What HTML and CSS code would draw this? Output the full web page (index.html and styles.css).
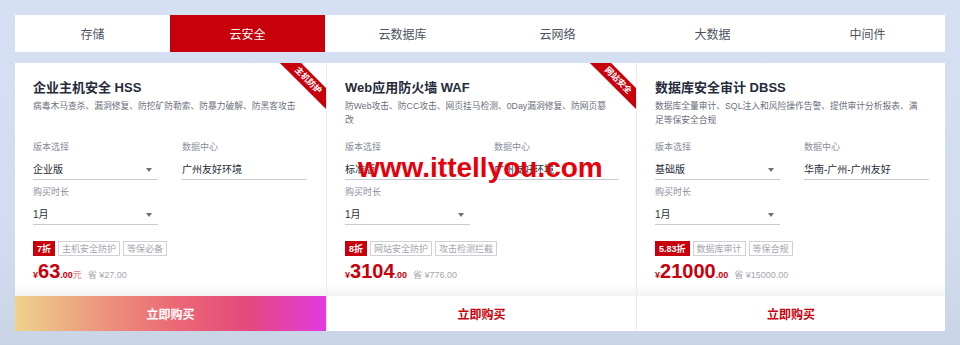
FILE: index.html
```html
<!DOCTYPE html>
<html lang="zh-CN">
<head>
<meta charset="utf-8">
<title>云安全</title>
<link rel="stylesheet" href="styles.css">
</head>
<body>
<div class="page">
  <nav class="tabs">
    <div class="tab">存储</div>
    <div class="tab active">云安全</div>
    <div class="tab">云数据库</div>
    <div class="tab">云网络</div>
    <div class="tab">大数据</div>
    <div class="tab">中间件</div>
  </nav>
  <div class="cards">
    <div class="card">
      <div class="ribbon">主机防护</div>
      <div class="card-body">
        <h3 class="title">企业主机安全 HSS</h3>
        <p class="desc">病毒木马查杀、漏洞修复、防挖矿防勒索、防暴力破解、防黑客攻击</p>
        <div class="form">
          <div class="field"><div class="label">版本选择</div><div class="select arrow">企业版</div></div>
          <div class="field"><div class="label">数据中心</div><div class="select">广州友好环境</div></div>
          <div class="field"><div class="label">购买时长</div><div class="select arrow">1月</div></div>
        </div>
        <div class="tags"><span class="tag hot">7折</span><span class="tag">主机安全防护</span><span class="tag">等保必备</span></div>
        <div class="price"><span class="yen">¥</span><span class="num">63</span><span class="dec">.00</span><span class="unit">元</span><span class="save">省 ¥27.00</span></div>
      </div>
      <div class="fade"></div>
      <div class="buy buy-grad">立即购买</div>
    </div>
    <div class="card">
      <div class="ribbon">网站安全</div>
      <div class="card-body">
        <h3 class="title">Web应用防火墙 WAF</h3>
        <p class="desc">防Web攻击、防CC攻击、网页挂马检测、0Day漏洞修复、防网页篡改</p>
        <div class="form">
          <div class="field"><div class="label">版本选择</div><div class="select arrow">标准版</div></div>
          <div class="field"><div class="label">数据中心</div><div class="select">广州友好环境</div></div>
          <div class="field"><div class="label">购买时长</div><div class="select arrow">1月</div></div>
        </div>
        <div class="tags"><span class="tag hot">8折</span><span class="tag">网站安全防护</span><span class="tag">攻击检测拦截</span></div>
        <div class="price"><span class="yen">¥</span><span class="num">3104</span><span class="dec">.00</span><span class="save">省 ¥776.00</span></div>
      </div>
      <div class="fade"></div>
      <div class="buy">立即购买</div>
    </div>
    <div class="card">
      <div class="card-body">
        <h3 class="title">数据库安全审计 DBSS</h3>
        <p class="desc">数据库全量审计、SQL注入和风险操作告警、提供审计分析报表、满足等保安全合规</p>
        <div class="form">
          <div class="field"><div class="label">版本选择</div><div class="select arrow">基础版</div></div>
          <div class="field"><div class="label">数据中心</div><div class="select">华南-广州-广州友好</div></div>
          <div class="field"><div class="label">购买时长</div><div class="select arrow">1月</div></div>
        </div>
        <div class="tags"><span class="tag hot">5.83折</span><span class="tag">数据库审计</span><span class="tag">等保合规</span></div>
        <div class="price"><span class="yen">¥</span><span class="num">21000</span><span class="dec">.00</span><span class="save">省 ¥15000.00</span></div>
      </div>
      <div class="fade"></div>
      <div class="buy">立即购买</div>
    </div>
  </div>
  <div class="watermark">www.ittellyou.com</div>
</div>
</body>
</html>
```
FILE: styles.css
```css
* { box-sizing: border-box; }
html, body { margin: 0; padding: 0; }
body {
  width: 960px;
  height: 345px;
  overflow: hidden;
  background: linear-gradient(180deg, #d5e1f2 0%, #d1ddef 70%, #c9d4e7 100%);
  font-family: "Liberation Sans", "Noto Sans CJK SC", sans-serif;
  color: #252b3a;
}
.page {
  position: relative;
  padding: 15px 15px 0 15px;
}
.tabs {
  display: grid;
  grid-template-columns: repeat(6, 1fr);
  height: 37px;
  background: #fff;
}
.tab {
  display: flex;
  align-items: center;
  justify-content: center;
  font-size: 12px;
  color: #4e5362;
}
.tab.active {
  background: #c7000b;
  color: #fff;
}
.cards {
  margin-top: 11px;
  display: grid;
  grid-template-columns: 311px 310px 309px;
  background: #fff;
}
.card {
  position: relative;
  overflow: hidden;
  display: flex;
  flex-direction: column;
  background: #fff;
}
.card + .card { border-left: 1px solid #ececec; }
.ribbon {
  position: absolute;
  top: 10px;
  right: -22px;
  width: 80px;
  height: 15px;
  background: #c7000b;
  color: #fff;
  font-size: 8.5px;
  font-weight: bold;
  line-height: 15px;
  text-align: center;
  transform: rotate(45deg);
}
.card-body {
  padding: 16px 18px 0 18px;
  height: 220px;
}
.title {
  margin: 0;
  font-size: 13px;
  line-height: 18px;
  font-weight: bold;
  color: #252b3a;
}
.desc {
  margin: 2px 0 0 0;
  width: 266px;
  height: 28px;
  font-size: 8.75px;
  line-height: 14px;
  color: #6b707c;
}
.form {
  margin-top: 13px;
  display: grid;
  grid-template-columns: 125px 125px;
  column-gap: 24px;
  row-gap: 5px;
}
.label {
  font-size: 9px;
  line-height: 14px;
  color: #8a8e99;
}
.select {
  position: relative;
  margin-top: 6px;
  height: 20px;
  line-height: 19px;
  font-size: 10px;
  color: #252b3a;
  border-bottom: 1px solid #c8cbd2;
}
.select.arrow::after {
  content: "";
  position: absolute;
  right: 6px;
  top: 8px;
  border-left: 3px solid transparent;
  border-right: 3px solid transparent;
  border-top: 4px solid #6b6f7a;
}
.tags {
  margin-top: 16px;
  display: flex;
  gap: 3px;
  height: 15px;
}
.tag {
  display: inline-flex;
  align-items: center;
  height: 15px;
  padding: 0 3px;
  border: 1px solid #cfd1d6;
  font-size: 9px;
  color: #a3a6ad;
}
.tag.hot {
  background: #c7000b;
  border-color: #c7000b;
  color: #fff;
  font-weight: bold;
}
.price {
  margin-top: 3px;
  height: 24px;
  line-height: 24px;
  color: #c7000b;
  white-space: nowrap;
}
.yen { font-size: 9px; font-weight: bold; }
.num { font-size: 20px; font-weight: bold; }
.dec { font-size: 9px; font-weight: bold; }
.unit { font-size: 9px; color: #e07a80; }
.save {
  margin-left: 6px;
  font-size: 9px;
  color: #a3a6ad;
}
.fade {
  height: 13px;
  background: linear-gradient(180deg, #ffffff 0%, #f3f3f5 100%);
}
.buy {
  height: 35px;
  display: flex;
  align-items: center;
  justify-content: center;
  font-size: 12px;
  font-weight: bold;
  color: #c7000b;
  background: #fff;
}
.buy-grad {
  color: #fff;
  background: linear-gradient(90deg, #eed38b 0%, #ec9b7e 25%, #eb6b75 50%, #e4497b 75%, #e23ae0 100%);
}
.watermark {
  position: absolute;
  left: 358px;
  top: 154px;
  font-size: 28px;
  line-height: 28px;
  font-weight: bold;
  color: #e5000b;
  font-family: "Liberation Sans", sans-serif;
  white-space: nowrap;
}
```
